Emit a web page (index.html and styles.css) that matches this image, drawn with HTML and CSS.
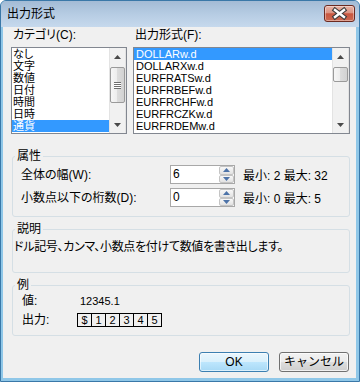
FILE: index.html
```html
<!DOCTYPE html>
<html lang="ja">
<head>
<meta charset="utf-8">
<title>出力形式</title>
<link rel="stylesheet" href="styles.css">
</head>
<body>
<div class="window">
  <div class="titlebar">
    <span class="title">出力形式</span>
    <span class="close-btn">
      <svg width="29" height="15" viewBox="0 0 29 15">
        <path d="M10 4 L19 11 M19 4 L10 11" stroke="#3a3a3a" stroke-width="4.6" stroke-linecap="square"/>
        <path d="M10 4 L19 11 M19 4 L10 11" stroke="#ffffff" stroke-width="2.4" stroke-linecap="square"/>
      </svg>
    </span>
  </div>
  <div class="client">
    <div class="lists">
      <div class="list-col list-col-cat">
        <div class="field-label">カテゴリ(C):</div>
        <div class="listbox">
          <ul class="items items-cjk">
            <li>なし</li>
            <li>文字</li>
            <li>数値</li>
            <li>日付</li>
            <li>時間</li>
            <li>日時</li>
            <li class="selected">通貨</li>
          </ul>
          <div class="scrollbar">
            <div class="sb-btn"><svg width="7" height="4" viewBox="0 0 7 4"><path d="M3.5 0 L7 4 H0 Z" fill="#4a4a4a"/></svg></div>
            <div class="sb-track">
              <div class="sb-thumb sb-thumb-long"><span class="grip"></span></div>
            </div>
            <div class="sb-btn"><svg width="7" height="4" viewBox="0 0 7 4"><path d="M0 0 H7 L3.5 4 Z" fill="#4a4a4a"/></svg></div>
          </div>
        </div>
      </div>
      <div class="list-col list-col-fmt">
        <div class="field-label">出力形式(F):</div>
        <div class="listbox">
          <ul class="items items-latin">
            <li class="selected">DOLLARw.d</li>
            <li>DOLLARXw.d</li>
            <li>EURFRATSw.d</li>
            <li>EURFRBEFw.d</li>
            <li>EURFRCHFw.d</li>
            <li>EURFRCZKw.d</li>
            <li>EURFRDEMw.d</li>
          </ul>
          <div class="scrollbar">
            <div class="sb-btn"><svg width="7" height="4" viewBox="0 0 7 4"><path d="M3.5 0 L7 4 H0 Z" fill="#4a4a4a"/></svg></div>
            <div class="sb-track">
              <div class="sb-thumb sb-thumb-short"></div>
            </div>
            <div class="sb-btn"><svg width="7" height="4" viewBox="0 0 7 4"><path d="M0 0 H7 L3.5 4 Z" fill="#4a4a4a"/></svg></div>
          </div>
        </div>
      </div>
    </div>

    <fieldset class="group group-attr">
      <legend>属性</legend>
      <div class="spin-row">
        <span class="spin-label">全体の幅(W):</span>
        <div class="spinbox">
          <span class="spin-value">6</span>
          <div class="spin-btns">
            <span><svg width="7" height="4" viewBox="0 0 7 4"><path d="M3.5 0 L7 4 H0 Z" fill="#4d73a8"/></svg></span>
            <span><svg width="7" height="4" viewBox="0 0 7 4"><path d="M0 0 H7 L3.5 4 Z" fill="#4d73a8"/></svg></span>
          </div>
        </div>
        <span class="spin-range">最小: 2 最大: 32</span>
      </div>
      <div class="spin-row">
        <span class="spin-label">小数点以下の桁数(D):</span>
        <div class="spinbox">
          <span class="spin-value">0</span>
          <div class="spin-btns">
            <span><svg width="7" height="4" viewBox="0 0 7 4"><path d="M3.5 0 L7 4 H0 Z" fill="#4d73a8"/></svg></span>
            <span><svg width="7" height="4" viewBox="0 0 7 4"><path d="M0 0 H7 L3.5 4 Z" fill="#4d73a8"/></svg></span>
          </div>
        </div>
        <span class="spin-range">最小: 0 最大: 5</span>
      </div>
    </fieldset>

    <fieldset class="group group-desc">
      <legend>説明</legend>
      <p class="desc">ドル記号、カンマ、小数点を付けて数値を書き出します。</p>
    </fieldset>

    <fieldset class="group group-example">
      <legend>例</legend>
      <div class="ex-row">
        <span class="ex-label">値:</span>
        <span class="ex-value">12345.1</span>
      </div>
      <div class="ex-row">
        <span class="ex-label">出力:</span>
        <span class="cells">
          <span class="cell">$</span><span class="cell">1</span><span class="cell">2</span><span class="cell">3</span><span class="cell">4</span><span class="cell">5</span>
        </span>
      </div>
    </fieldset>

    <div class="buttons">
      <button class="btn btn-default">OK</button>
      <button class="btn">キャンセル</button>
    </div>
  </div>
</div>
</body>
</html>
```

FILE: styles.css
```css
* {
  box-sizing: border-box;
}

html,
body {
  margin: 0;
  padding: 0;
}

body {
  width: 360px;
  height: 382px;
  overflow: hidden;
  font-family: "Liberation Sans", "Noto Sans CJK JP", sans-serif;
  font-size: 12px;
  color: #000;
  font-feature-settings: "palt" 1;
  background: #ffffff;
}

.window {
  width: 360px;
  height: 382px;
  display: flex;
  flex-direction: column;
  border: 1px solid #3a78a8;
  border-radius: 6px 6px 0 0;
  background: #8fc7e8;
}

.titlebar {
  height: 26px;
  flex: none;
  display: flex;
  justify-content: space-between;
  align-items: flex-start;
  padding-left: 6px;
  border-radius: 5px 5px 0 0;
  background: linear-gradient(to bottom, #a3bbd5 0%, #b6cce3 50%, #c6d9ed 100%);
}

.title {
  line-height: 26px;
  font-size: 12px;
}

.close-btn {
  margin: 4px 4px 0 0;
  width: 31px;
  height: 17px;
  display: flex;
  align-items: center;
  justify-content: center;
  border: 1px solid #6c2a21;
  border-radius: 3px;
  background: linear-gradient(to bottom, #e8b3a6 0%, #dc9483 45%, #c8563f 52%, #cc6a52 100%);
  box-shadow: inset 0 0 0 1px rgba(255, 255, 255, 0.4);
}

.client {
  flex: 1;
  margin: 0 3px 3px 2px;
  padding: 1px 6px 0 8px;
  background: #f0f0f0;
  display: flex;
  flex-direction: column;
}

/* list boxes */
.lists {
  display: flex;
  gap: 6px;
}

.list-col-cat {
  width: 116px;
}

.list-col-fmt {
  width: 217px;
}

.field-label {
  line-height: 14px;
  padding-left: 2px;
  margin-bottom: 5px;
  white-space: nowrap;
}

.listbox {
  height: 87px;
  border: 1px solid #828790;
  background: #ffffff;
  display: flex;
}

.items {
  list-style: none;
  margin: 0;
  padding: 0;
  flex: 1;
  min-width: 0;
}

.items li {
  height: 12px;
  line-height: 12px;
  padding-left: 1px;
  white-space: nowrap;
  overflow: hidden;
}

.items-cjk li {
  font-size: 11px;
}

.items-latin li {
  font-size: 11px;
  padding-left: 2px;
}

.items li.selected {
  background: #3399ff;
  color: #ffffff;
}

.scrollbar {
  width: 17px;
  flex: none;
  display: flex;
  flex-direction: column;
  background: linear-gradient(to right, #e3e3e3 0, #e3e3e3 1px, #f1f1f1 1px, #f1f1f1 16px, #e3e3e3 16px);
}

.sb-btn {
  height: 17px;
  flex: none;
  display: flex;
  align-items: center;
  justify-content: center;
}

.sb-track {
  flex: 1;
  padding: 2px 1px 0;
}

.sb-thumb {
  border: 1px solid #9a9a9a;
  border-radius: 2px;
  background: linear-gradient(to right, #f6f6f6 0%, #ececec 50%, #dcdcdc 50%, #d2d2d2 100%);
  display: flex;
  align-items: center;
  justify-content: center;
}

.sb-thumb-long {
  height: 36px;
}

.sb-thumb-short {
  height: 15px;
}

.grip {
  width: 7px;
  height: 7px;
  background: repeating-linear-gradient(to bottom, #6e6e6e 0, #6e6e6e 1px, #ffffff 1px, #ffffff 2px);
}

/* group boxes */
.group {
  margin: 0 0 0 1px;
  padding: 0;
  border: 1px solid #d5dfe5;
  border-radius: 3px;
  min-inline-size: 0;
}

.group legend {
  padding: 0 2px;
  line-height: 14px;
}

.group-attr {
  margin-top: 15px;
  padding: 2px 0 9px 8px;
}

.group-attr legend,
.group-example legend {
  margin-left: -6px;
}

.group-desc {
  margin-top: 5px;
  padding: 4px 0 18px 1px;
}

.group-desc legend {
  margin-left: 1px;
}

.group-example {
  margin-top: 5px;
  padding: 2px 0 8px 8px;
}

.spin-row {
  display: flex;
  align-items: center;
  height: 19px;
}

.spin-row + .spin-row {
  margin-top: 4px;
}

.spin-label {
  width: 149px;
  line-height: 14px;
  white-space: nowrap;
}

.spinbox {
  width: 65px;
  height: 19px;
  border: 1px solid #a8a8a8;
  background: #ffffff;
  display: flex;
}

.spin-value {
  flex: 1;
  padding-left: 2px;
  line-height: 17px;
}

.spin-btns {
  width: 15px;
  display: flex;
  flex-direction: column;
}

.spin-btns span {
  flex: 1;
  display: flex;
  align-items: center;
  justify-content: center;
  border: 1px solid #c4c4c4;
  border-radius: 2px;
  background: linear-gradient(to bottom, #f8f8f8, #e2e2e2);
}

.spin-range {
  margin-left: 8px;
  white-space: nowrap;
}

.desc {
  margin: 0;
  line-height: 14px;
  white-space: nowrap;
  letter-spacing: -0.3px;
}

.ex-row {
  display: flex;
  align-items: center;
  height: 14px;
  line-height: 14px;
}

.ex-row + .ex-row {
  margin-top: 5px;
}

.ex-label {
  width: 56px;
  padding-left: 1px;
}

.ex-value {
  font-size: 11px;
  padding-left: 3px;
}

.cells {
  display: flex;
  border-left: 1px solid #000;
}

.cell {
  width: 14px;
  height: 14px;
  border: 1px solid #000;
  border-left: 0;
  font-size: 11px;
  line-height: 12px;
  text-align: center;
}

/* buttons */
.buttons {
  margin-top: 16px;
  display: flex;
  justify-content: flex-end;
  gap: 10px;
  padding-right: 1px;
}

.btn {
  width: 70px;
  height: 20px;
  padding: 0;
  font-family: inherit;
  font-size: 12px;
  line-height: 18px;
  color: #000;
  border: 1px solid #707070;
  border-radius: 3px;
  background: linear-gradient(to bottom, #f2f2f2 0%, #ebebeb 50%, #dddddd 50%, #cfcfcf 100%);
  box-shadow: inset 0 0 0 1px rgba(255, 255, 255, 0.7);
}

.btn-default {
  border-color: #3c7fb1;
  background: linear-gradient(to bottom, #eaf6fd 0%, #d9f0fc 50%, #bee6fd 50%, #a7d9f5 100%);
  box-shadow: inset 0 0 0 1px rgba(255, 255, 255, 0.6);
}
```
